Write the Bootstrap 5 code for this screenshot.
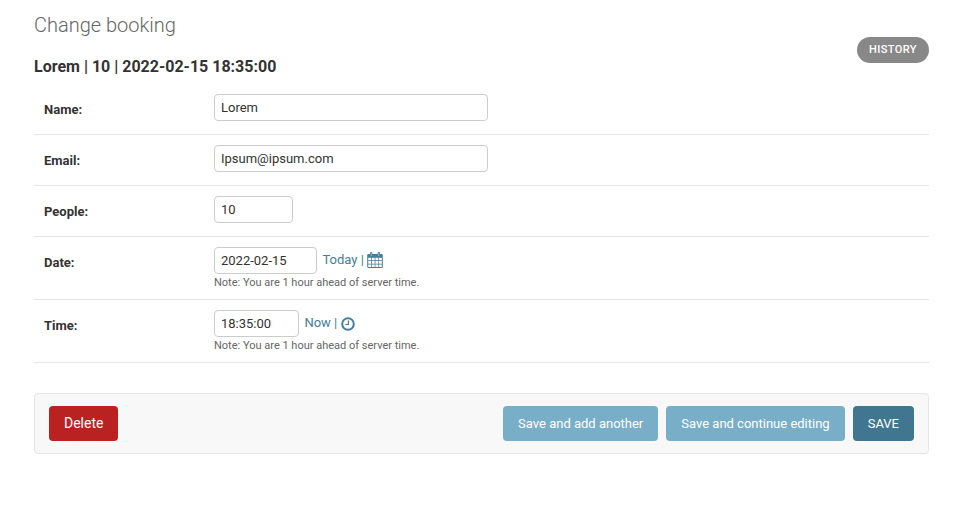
<!DOCTYPE html>
<html lang="en">
<head>
<meta charset="utf-8">
<title>Change booking</title>
<link href="https://cdn.jsdelivr.net/npm/bootstrap@5.3.0/dist/css/bootstrap.min.css" rel="stylesheet">
<style>
body{font-family:Roboto,"Liberation Sans",sans-serif;font-size:13px;line-height:15px;color:#333;background:#fff}
.page{padding:13px 24px 0 34px}
.page-head{height:71px}
.page-title{font-size:20px;font-weight:300;line-height:24px;color:#666;margin:0 0 20px}
.object-title{font-size:16px;font-weight:700;line-height:20px;margin:0}
.history{font-size:11px;font-weight:500;letter-spacing:.42px;line-height:14px;padding:6px 12px;background:#888;color:#fff;margin-top:24px}
.form-line{padding:10px;min-height:51px;border-bottom:1px solid #e6e6e6}
.field-label{width:170px;font-weight:700;padding-top:8px}
.form-control.field{font-size:13px;line-height:15px;height:27px;min-height:0;padding:5px 6px;border:1px solid #ccc;border-radius:4px;color:#333}
.form-control.w-text{width:274px}
.form-control.w-num{width:79px}
.form-control.w-date{width:103px}
.form-control.w-time{width:85px}
.shortcuts{color:#447e9b;margin-left:5.4px;height:27px}
.shortcuts a{color:#447e9b}
.shortcuts .txt{padding-top:5px;white-space:pre}
.shortcuts .txt-date{width:44.6px}
.shortcuts .txt-time{width:35.6px}
.shortcuts svg{display:block;margin-top:5px}
.note{font-size:11px;line-height:13px;color:#666;margin-top:2px}
.submit-row{margin-top:30px;padding:12px 14px;background:#f8f8f8;border:1px solid #e6e6e6;border-radius:4px}
.btn.act{height:35px;padding:0 15px;font-size:13px;line-height:35px;color:#fff;border:0;border-radius:4px}
.btn.del{background:#ba2121;font-size:14px}
.btn.alt{background:#79aec8}
.btn.main{background:#417690}
</style>
<script src="https://cdn.jsdelivr.net/npm/bootstrap@5.3.0/dist/js/bootstrap.bundle.min.js"></script>
</head>
<body>
<main class="page">
<header class="page-head d-flex justify-content-between align-items-start">
<div>
<h1 class="page-title">Change booking</h1>
<h2 class="object-title">Lorem | 10 | 2022-02-15 18:35:00</h2>
</div>
<a href="#" class="history rounded-pill text-decoration-none">HISTORY</a>
</header>
<form>
<div class="form-line d-flex align-items-start">
<label class="field-label" for="name">Name:</label>
<input class="form-control field w-text" id="name" type="text" value="Lorem">
</div>
<div class="form-line d-flex align-items-start">
<label class="field-label" for="email">Email:</label>
<input class="form-control field w-text" id="email" type="text" value="Ipsum@ipsum.com">
</div>
<div class="form-line d-flex align-items-start">
<label class="field-label" for="people">People:</label>
<input class="form-control field w-num" id="people" type="text" value="10">
</div>
<div class="form-line d-flex align-items-start">
<label class="field-label" for="date">Date:</label>
<div>
<div class="d-flex">
<input class="form-control field w-date" id="date" type="text" value="2022-02-15">
<div class="shortcuts d-flex"><span class="txt txt-date"><a href="#" class="text-decoration-none">Today</a> |</span>
<a href="#" aria-label="Choose a date"><svg width="16" height="16" viewBox="0 0 16 16"><path fill="#447e9b" d="M1.3 2H3V1.2Q3 0 4.2 0t1.2 1.2V2h5.2v-.8Q10.600 0 11.800 0T13 1.200V2h1.700q1.100 0 1.100 1.100v11.700q0 1.100-1.100 1.100H1.300q-1.100 0-1.100-1.100V3.100Q.2 2 1.300 2z"/><path fill="#fff" d="M1.200 5.800h2.800v2.500H1.200zM4.700 5.800h3v2.500h-3zM8.400 5.800h3v2.500h-3zM12.100 5.800h2.700v2.500h-2.700zM1.200 9h2.800v2.800H1.200zM4.700 9h3v2.800h-3zM8.400 9h3v2.800h-3zM12.100 9h2.700v2.800h-2.700zM1.200 12.500h2.800v2.400H1.200zM4.700 12.500h3v2.400h-3zM8.400 12.500h3v2.400h-3zM12.100 12.500h2.700v2.400h-2.700z"/><path stroke="#c5d8e1" stroke-width=".7" d="M4.200 1v3M11.800 1v3"/></svg></a></div>
</div>
<div class="note">Note: You are 1 hour ahead of server time.</div>
</div>
</div>
<div class="form-line d-flex align-items-start">
<label class="field-label" for="time">Time:</label>
<div>
<div class="d-flex">
<input class="form-control field w-time" id="time" type="text" value="18:35:00">
<div class="shortcuts d-flex"><span class="txt txt-time"><a href="#" class="text-decoration-none">Now</a> |</span>
<a href="#" aria-label="Choose a time"><svg width="16" height="16" viewBox="0 0 16 16" fill="none" stroke="#447e9b"><circle cx="8" cy="9" r="5.800" stroke-width="2"/><path stroke-width="1.200" d="M8.400 5.500v4H5.300"/></svg></a></div>
</div>
<div class="note">Note: You are 1 hour ahead of server time.</div>
</div>
</div>
<div class="submit-row d-flex gap-2">
<button type="button" class="btn act del me-auto">Delete</button>
<button type="button" class="btn act alt">Save and add another</button>
<button type="button" class="btn act alt">Save and continue editing</button>
<button type="button" class="btn act main">SAVE</button>
</div>
</form>
</main>
</body>
</html>
